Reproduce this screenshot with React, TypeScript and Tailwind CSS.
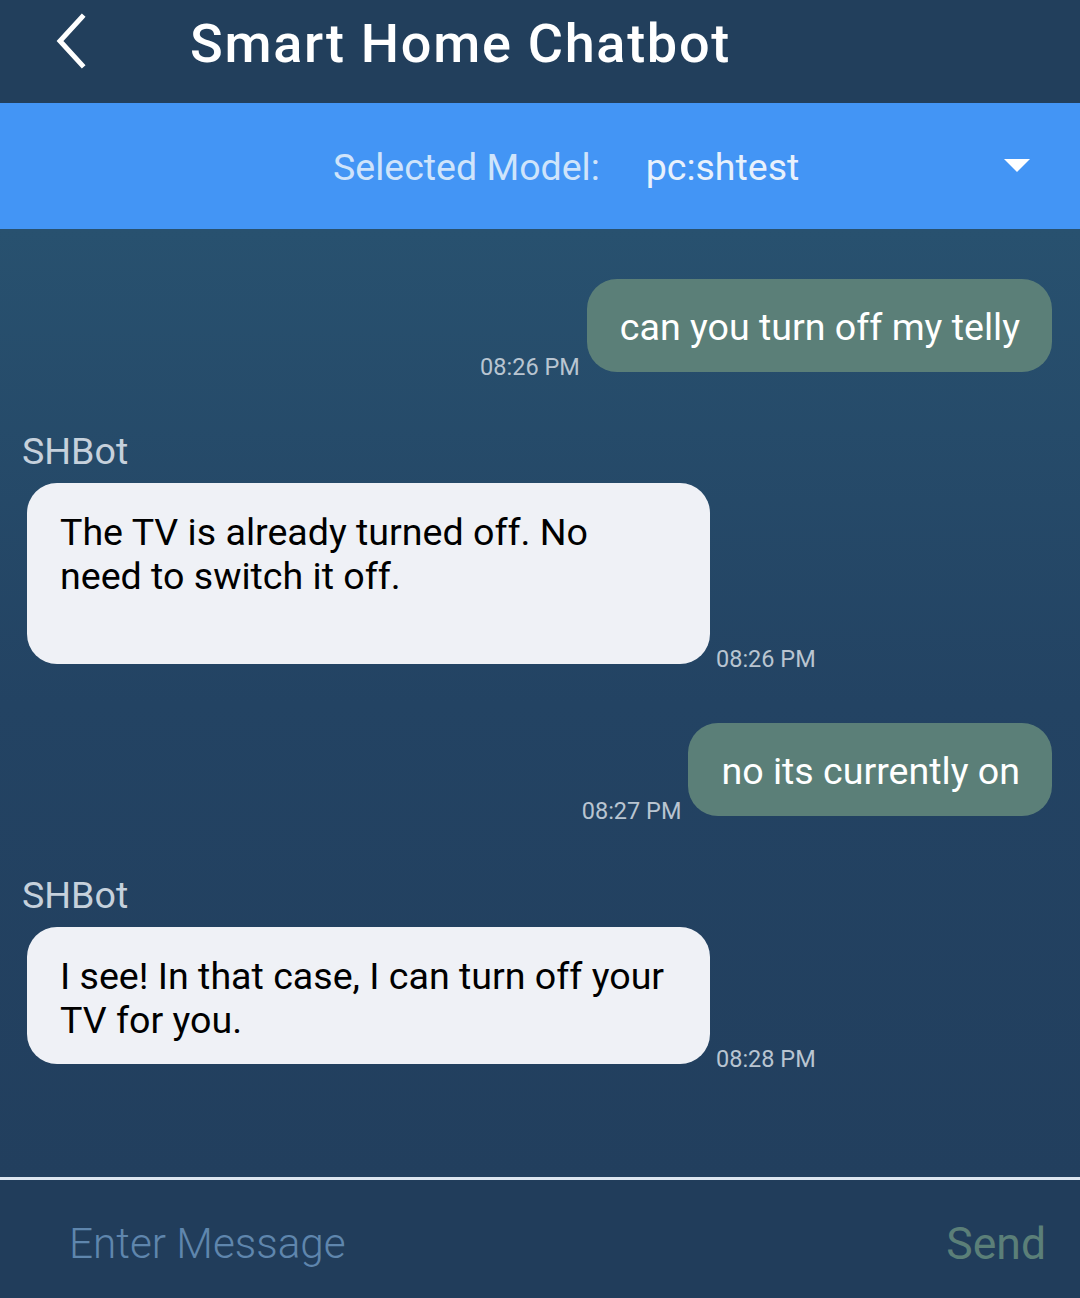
import React from "react";

function UserMsg({ text, time, mt }: { text: string; time: string; mt: string }) {
  return (
    <div className={`flex justify-end items-end pr-[28px] ${mt}`}>
      <span className="text-[23.5px] text-[#b9c5d1] translate-y-[9px] mr-[7px] leading-[28px]">{time}</span>
      <div className="bg-[#5b7f78] rounded-[30px] pl-[33px] pr-[32px] pt-[26px] pb-[23px] text-white text-[37.6px] leading-[44px]">
        {text}
      </div>
    </div>
  );
}

function BotMsg({ lines, time, mt, extra }: { lines: string[]; time: string; mt: string; extra?: boolean }) {
  return (
    <div className={mt}>
      <div className="pl-[22px] text-[37.6px] leading-[44px] text-[#c6d1dc]">SHBot</div>
      <div className="flex items-end pl-[27px] mt-[10px]">
        <div className={`w-[683px] bg-[#eff1f6] rounded-[30px] pl-[33px] pr-[16px] pt-[27px] ${extra ? "pb-[66px]" : "pb-[22px]"} text-black text-[37.6px] leading-[44px]`}>
          {lines.map((l, i) => (
            <div key={i} className="whitespace-nowrap">{l}</div>
          ))}
        </div>
        <span className="text-[23.5px] text-[#b9c5d1] translate-y-[9px] ml-[6px] leading-[28px]">{time}</span>
      </div>
    </div>
  );
}

export default function App() {
  return (
    <div
      className="w-[1080px] h-[1298px] flex flex-col overflow-hidden"
      style={{ fontFamily: "Roboto, 'Noto Sans', sans-serif" }}
    >
      <div className="h-[103px] bg-[#223f5c] flex items-center shrink-0">
        <svg width="40" height="56" viewBox="0 0 40 56" className="ml-[50px] mt-[-22px]">
          <path d="M32 4 L10 28 L32 52" fill="none" stroke="white" strokeWidth="5" strokeLinecap="square" />
        </svg>
        <div className="ml-[100px] mt-[-16px] text-white text-[54px] font-medium tracking-[1.7px] leading-none">
          Smart Home Chatbot
        </div>
      </div>
      <div className="h-[126px] bg-[#4395f5] flex items-center shrink-0 relative">
        <span className="ml-[333px] mt-[4px] text-[37.5px] text-[#cfe4fb] leading-none">Selected Model:</span>
        <span className="ml-[46px] mt-[4px] text-[37.5px] text-[#e8f1fc] leading-none">pc:shtest</span>
        <svg width="26" height="14" viewBox="0 0 26 14" className="ml-auto mr-[50px]">
          <path d="M0 0 L26 0 L13 13 Z" fill="white" />
        </svg>
      </div>
      <div className="flex-1 bg-gradient-to-b from-[#28516f] via-[#234363] to-[#223f5e]">
        <UserMsg text="can you turn off my telly" time="08:26 PM" mt="mt-[50px]" />
        <BotMsg
          lines={["The TV is already turned off. No", "need to switch it off."]}
          time="08:26 PM"
          mt="mt-[57px]"
          extra
        />
        <UserMsg text="no its currently on" time="08:27 PM" mt="mt-[59px]" />
        <BotMsg lines={["I see! In that case, I can turn off your", "TV for you."]} time="08:28 PM" mt="mt-[57px]" />
      </div>
      <div className="h-[3px] bg-[#dde6f0] shrink-0" />
      <div className="h-[118px] bg-[#213d5b] flex items-center shrink-0">
        <span className="ml-[69px] mt-[10px] text-[42.3px] font-light text-[#5f86ad] leading-none">Enter Message</span>
        <span className="ml-auto mr-[34px] mt-[10px] text-[44.5px] text-[#5b7f78] leading-none">Send</span>
      </div>
    </div>
  );
}
